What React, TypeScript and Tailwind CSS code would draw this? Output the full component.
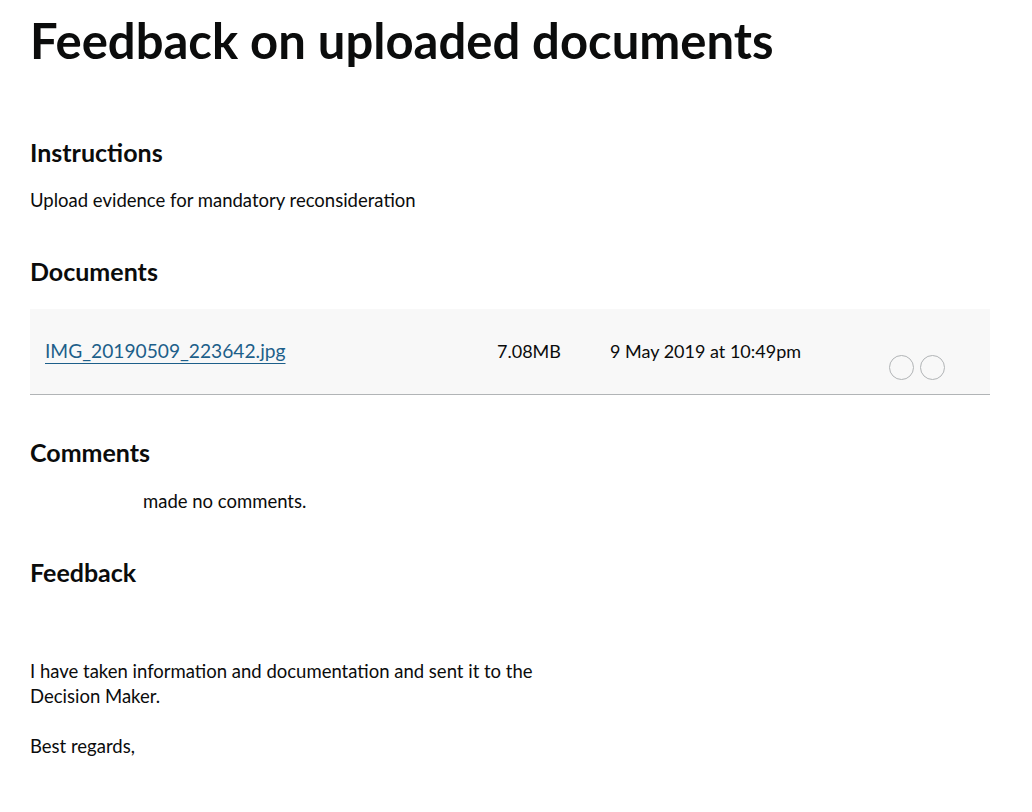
export default function App() {
  return (
    <main className="min-h-screen bg-white px-[30px] pt-[10px] text-[#0b0c0c] font-['Lato','Liberation_Sans',sans-serif]">
      <h1 className="text-[49px] font-bold leading-[1.25]">Feedback on uploaded documents</h1>

      <section className="mt-[66px]">
        <h2 className="text-[25px] font-bold leading-[30px]">Instructions</h2>
        <p className="mt-[21px] text-[18.5px] leading-[25px]">Upload evidence for mandatory reconsideration</p>
      </section>

      <section className="mt-[43px]">
        <h2 className="text-[25px] font-bold leading-[30px]">Documents</h2>
        <div className="mt-[23px] flex h-[86px] w-[960px] items-center border-b border-[#b1b4b6] bg-[#f8f8f8] pl-[15px] text-[18px]">
          <a href="#" className="w-[452px] text-[19.2px] text-[#1d5f8a] underline decoration-1 underline-offset-[5px]">IMG_20190509_223642.jpg</a>
          <span className="w-[113px]">7.08MB</span>
          <span className="w-[279px]">9 May 2019 at 10:49pm</span>
          <div className="mt-[31px] flex gap-[6px]">
            <span className="h-[25px] w-[25px] rounded-full border border-[#b1b4b6]" />
            <span className="h-[25px] w-[25px] rounded-full border border-[#b1b4b6]" />
          </div>
        </div>
      </section>

      <section className="mt-[42px]">
        <h2 className="text-[25px] font-bold leading-[30px]">Comments</h2>
        <p className="mt-[22px] text-[18.5px] leading-[25px]"><span className="inline-block w-[113px]" />made no comments.</p>
      </section>

      <section className="mt-[43px]">
        <h2 className="text-[25px] font-bold leading-[30px]">Feedback</h2>
        <div className="mt-[16px] h-[56px]" />
        <p className="w-[520px] text-[18.5px] leading-[25px]">I have taken information and documentation and sent it to the Decision Maker.</p>
        <p className="mt-[25px] text-[18.5px] leading-[25px]">Best regards,</p>
      </section>
    </main>
  );
}
